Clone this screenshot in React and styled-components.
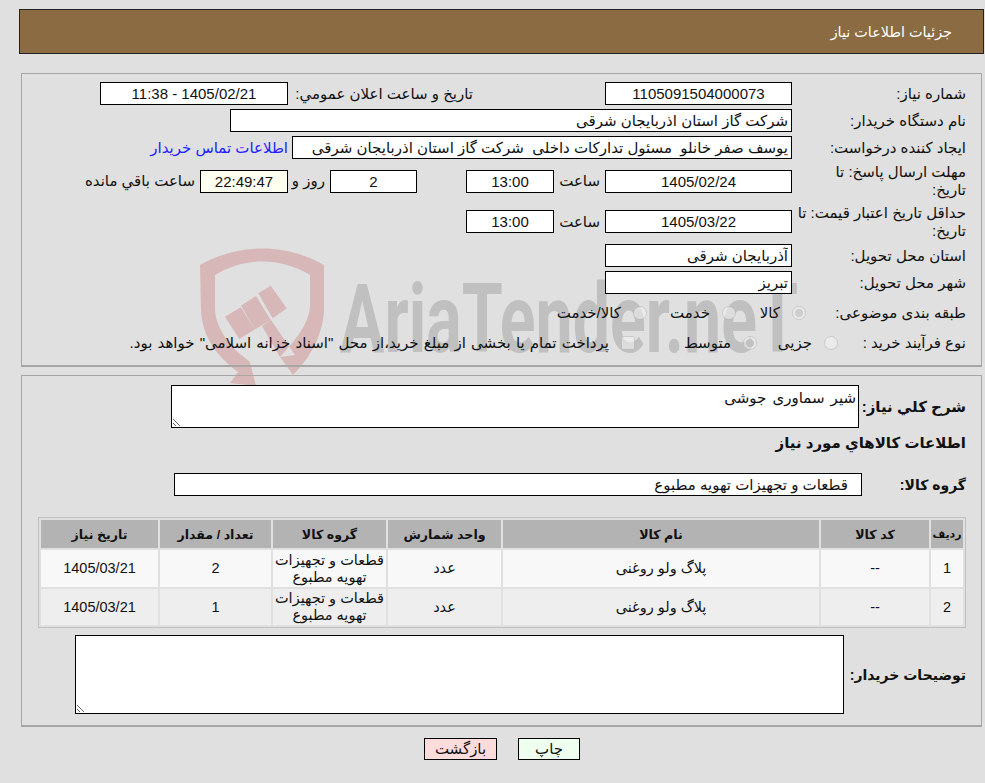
// React
import React from "react";
// Styles
import styled, { createGlobalStyle } from "styled-components";

const FONT = `"Liberation Sans", "DejaVu Sans", sans-serif`;

const ITEMS = [
  { id: 1, qty: 2, date: "1405/03/21" },
  { id: 2, qty: 1, date: "1405/03/21" },
];

const Watermark = () => (
  <WatermarkSvg viewBox="0 0 985 400" width="985" height="400">
    <path
      fill="#d7b7b7"
      d="M200 265C238 243 286 243 324 265L324 310C323 335 310 358 293 375L280 357L295 355L271 320L262 326L280 357C296 340 310 322 310 305L310 275C280 257 245 257 215 275L215 310C216 328 230 347 245 358L250 362L256 386L230 383L238 372C215 355 202 335 201 310Z"
    />
    <path fill="#d7b7b7" d="M225 316.7L240.7 307.3L255 329.3L239.3 339Z" />
    <path fill="#d7b7b7" d="M241 305.7L256 296L270.7 320L255 329.3Z" />
    <path fill="#d7b7b7" d="M258.3 293.3L270.7 285.7L286.7 308.3L272.7 318.3Z" />
    <WatermarkText x="340" y="352" textLength="458" lengthAdjust="spacingAndGlyphs" direction="ltr">
      AriaTender.neT
    </WatermarkText>
  </WatermarkSvg>
);

const Option = ({ width, type = "radio", checked, children }) => (
  <OptionWrap $w={width}>
    <OptionInput type={type} disabled checked={!!checked} readOnly />
    <OptionText>{children}</OptionText>
  </OptionWrap>
);

export default function App() {
  return (
    <Page dir="rtl">
      <GlobalStyle />
      <Watermark />
      <Header>جزئیات اطلاعات نیاز</Header>

      <Panel $mt={19} $pt={8} $h={294}>
        <Row $h={23}>
          <Label>شماره نیاز:</Label>
          <Box $w={187} $center value="1105091504000073" />
          <Label $w={185} $mr={132}>تاريخ و ساعت اعلان عمومي:</Label>
          <Box $w={188} $center value="1405/02/21 - 11:38" />
        </Row>
        <Row $h={23} $mt={4}>
          <Label>نام دستگاه خریدار:</Label>
          <Box $w={562} value="شرکت گاز استان اذربایجان شرقی" />
        </Row>
        <Row $h={23} $mt={4}>
          <Label>ایجاد کننده درخواست:</Label>
          <Box $w={500} value="یوسف صفر خانلو  مسئول تدارکات داخلی  شرکت گاز استان اذربایجان شرقی" />
          <ContactLink href="#">اطلاعات تماس خریدار</ContactLink>
        </Row>
        <Row $h={32} $mt={6}>
          <Label>مهلت ارسال پاسخ: تا<br />تاریخ:</Label>
          <Box $w={187} $center $h={23} value="1405/02/24" />
          <Unit $w={51}>ساعت</Unit>
          <Box $w={88} $center $h={23} value="13:00" />
          <Spacer $w={49} />
          <Box $w={87} $center $h={23} value="2" />
          <Unit $w={42}>روز و</Unit>
          <Box $w={88} $center $h={23} $bg="#fffff0" value="22:49:47" />
          <Unit>ساعت باقي مانده</Unit>
        </Row>
        <Row $h={33} $mt={8}>
          <Label>حداقل تاریخ اعتبار قیمت: تا تاریخ:</Label>
          <Box $w={187} $center $h={23} value="1405/03/22" />
          <Unit $w={51}>ساعت</Unit>
          <Box $w={88} $center $h={23} value="13:00" />
        </Row>
        <Row $h={23} $mt={6}>
          <Label>استان محل تحویل:</Label>
          <Box $w={187} value="آذربایجان شرقی" />
        </Row>
        <Row $h={23} $mt={4}>
          <Label>شهر محل تحویل:</Label>
          <Box $w={187} value="تبریز" />
        </Row>
        <Row $h={30} $mt={4}>
          <Label $w={160}>طبقه بندی موضوعی:</Label>
          <Option width={70} checked>کالا</Option>
          <Option width={89}>خدمت</Option>
          <Option>کالا/خدمت</Option>
        </Row>
        <Row $h={30}>
          <Label $w={128}>نوع فرآیند خرید :</Label>
          <Option width={81}>جزیی</Option>
          <Option width={122} checked>متوسط</Option>
          <Option type="checkbox">پرداخت تمام یا بخشی از مبلغ خرید،از محل "اسناد خزانه اسلامی" خواهد بود.</Option>
        </Row>
      </Panel>

      <Panel $mt={8} $pt={9} $h={352}>
        <Row $h={43} $top>
          <StrongLabel $w={107}>شرح کلي نیاز:</StrongLabel>
          <Note $w={688} $h={43} readOnly value="شیر سماوری جوشی" />
        </Row>
        <Heading>اطلاعات کالاهاي مورد نیاز</Heading>
        <Row $h={23} $mt={17}>
          <StrongLabel $w={104} $fs={14}>گروه کالا:</StrongLabel>
          <Box $w={688} $pr={13} value="قطعات و تجهیزات تهویه مطبوع" />
        </Row>
        <TableWrap>
          <ItemsTable>
            <colgroup>
              <col width="32" />
              <col width="108" />
              <col width="316" />
              <col width="113" />
              <col width="113" />
              <col width="111" />
              <col width="117" />
            </colgroup>
            <thead>
              <tr>
                <HeadCell $fs={11}>ردیف</HeadCell>
                <HeadCell>کد کالا</HeadCell>
                <HeadCell>نام کالا</HeadCell>
                <HeadCell>واحد شمارش</HeadCell>
                <HeadCell>گروه کالا</HeadCell>
                <HeadCell>تعداد / مقدار</HeadCell>
                <HeadCell>تاریخ نیاز</HeadCell>
              </tr>
            </thead>
            <tbody>
              {ITEMS.map((item) => (
                <ItemRow key={item.id} $odd={item.id % 2 === 1}>
                  <td>{item.id}</td>
                  <td>--</td>
                  <td>پلاگ ولو روغنی</td>
                  <td>عدد</td>
                  <td>قطعات و تجهیزات تهویه مطبوع</td>
                  <td>{item.qty}</td>
                  <td>{item.date}</td>
                </ItemRow>
              ))}
            </tbody>
          </ItemsTable>
        </TableWrap>
        <Row $h={79} $mt={7}>
          <StrongLabel $w={122} $fs={14}>توضیحات خریدار:</StrongLabel>
          <Note $w={769} $h={79} readOnly value="" />
        </Row>
      </Panel>

      <Actions>
        <ActionButton $bg="#efffef" $w={62}>چاپ</ActionButton>
        <ActionButton $bg="#ffdcdc" $w={73}>بازگشت</ActionButton>
      </Actions>
    </Page>
  );
}

const GlobalStyle = createGlobalStyle`
  html, body {
    margin: 0;
    padding: 0;
    background: #e0e0e0;
  }
  * {
    box-sizing: border-box;
  }
`;

const Page = styled.div`
  position: relative;
  height: 783px;
  padding: 9px 1px 0 19px;
  overflow: hidden;
  font-family: ${FONT};
  font-size: 15px;
  color: #111;
`;

const WatermarkSvg = styled.svg`
  position: absolute;
  top: 0;
  left: 0;
`;

const WatermarkText = styled.text`
  font-family: "Roboto", sans-serif;
  font-weight: 700;
  font-size: 96px;
  fill: #c0c0c0;
`;

const Header = styled.div`
  position: relative;
  height: 45px;
  padding-right: 31px;
  display: flex;
  align-items: center;
  background: #8b6c42;
  border: 1px solid #222;
  color: #fff;
  font-size: 14.4px;
`;

const Panel = styled.div`
  position: relative;
  height: ${(p) => p.$h}px;
  margin: ${(p) => p.$mt}px 2px 0 2px;
  padding: ${(p) => p.$pt}px 15px 0 0;
  border: 1px solid #a6a6a6;
  border-bottom-width: 2px;
`;

const Row = styled.div`
  display: flex;
  align-items: ${(p) => (p.$top ? "flex-start" : "center")};
  height: ${(p) => p.$h}px;
  margin-top: ${(p) => p.$mt || 0}px;
`;

const Label = styled.div`
  flex: none;
  width: ${(p) => p.$w || 174}px;
  margin-right: ${(p) => p.$mr || 0}px;
  padding-left: 2px;
  line-height: 18px;
`;

const StrongLabel = styled.div`
  flex: none;
  align-self: center;
  width: ${(p) => p.$w}px;
  font-weight: 700;
  font-size: ${(p) => p.$fs || 15}px;
  white-space: nowrap;
`;

const Box = styled.input.attrs({ readOnly: true, type: "text" })`
  flex: none;
  width: ${(p) => p.$w}px;
  height: ${(p) => p.$h || 23}px;
  padding: 0 ${(p) => p.$pr || 3}px 0 3px;
  border: 1px solid #000;
  border-radius: 0;
  outline: none;
  background: ${(p) => p.$bg || "#fff"};
  color: #111;
  font-family: ${FONT};
  font-size: 15px;
  text-align: ${(p) => (p.$center ? "center" : "right")};
`;

const Note = styled.textarea`
  flex: none;
  width: ${(p) => p.$w}px;
  height: ${(p) => p.$h}px;
  padding: 3px 2px;
  border: 1px solid #000;
  border-radius: 0;
  outline: none;
  background: #fff;
  color: #111;
  font-family: ${FONT};
  font-size: 15px;
  word-spacing: 2px;
`;

const Unit = styled.div`
  flex: none;
  width: ${(p) => (p.$w ? `${p.$w}px` : "auto")};
  padding-right: 5px;
  white-space: nowrap;
`;

const Spacer = styled.div`
  flex: none;
  width: ${(p) => p.$w}px;
`;

const ContactLink = styled.a`
  margin-right: 4px;
  color: #2222ff;
  text-decoration: none;
  white-space: nowrap;
`;

const OptionWrap = styled.label`
  flex: none;
  display: flex;
  align-items: center;
  width: ${(p) => (p.$w ? `${p.$w}px` : "auto")};
`;

const OptionInput = styled.input`
  flex: none;
  width: 14px;
  height: 14px;
  margin: 0 0 0 12px;
  opacity: 0.8;
`;

const OptionText = styled.span`
  white-space: nowrap;
  word-spacing: 1px;
`;

const Heading = styled.div`
  margin-top: 2px;
  height: 26px;
  line-height: 26px;
  font-weight: 700;
  font-size: 15px;
`;

const TableWrap = styled.div`
  margin-top: 21px;
  width: 928px;
  border: 1px solid #c0c0c0;
`;

const ItemsTable = styled.table`
  width: 100%;
  table-layout: fixed;
  border-collapse: separate;
  border-spacing: 2px;
`;

const HeadCell = styled.th`
  height: 28px;
  padding: 0;
  background: #b3b3b3;
  font-size: ${(p) => p.$fs || 12.6}px;
  font-weight: 700;
  text-align: center;
`;

const ItemRow = styled.tr`
  background: ${(p) => (p.$odd ? "#f8f8f8" : "#eeeeee")};

  td {
    height: 37px;
    padding: 0;
    font-size: 14.5px;
    line-height: 17px;
    text-align: center;
  }

  &:last-child td {
    height: 36px;
  }
`;

const Actions = styled.div`
  position: relative;
  display: flex;
  gap: 21px;
  margin-top: 11px;
  padding-right: 404px;
`;

const ActionButton = styled.button`
  width: ${(p) => p.$w}px;
  height: 22px;
  padding: 0;
  border: 1px solid #000;
  background: ${(p) => p.$bg};
  color: #111;
  font-family: ${FONT};
  font-size: 15px;
`;
